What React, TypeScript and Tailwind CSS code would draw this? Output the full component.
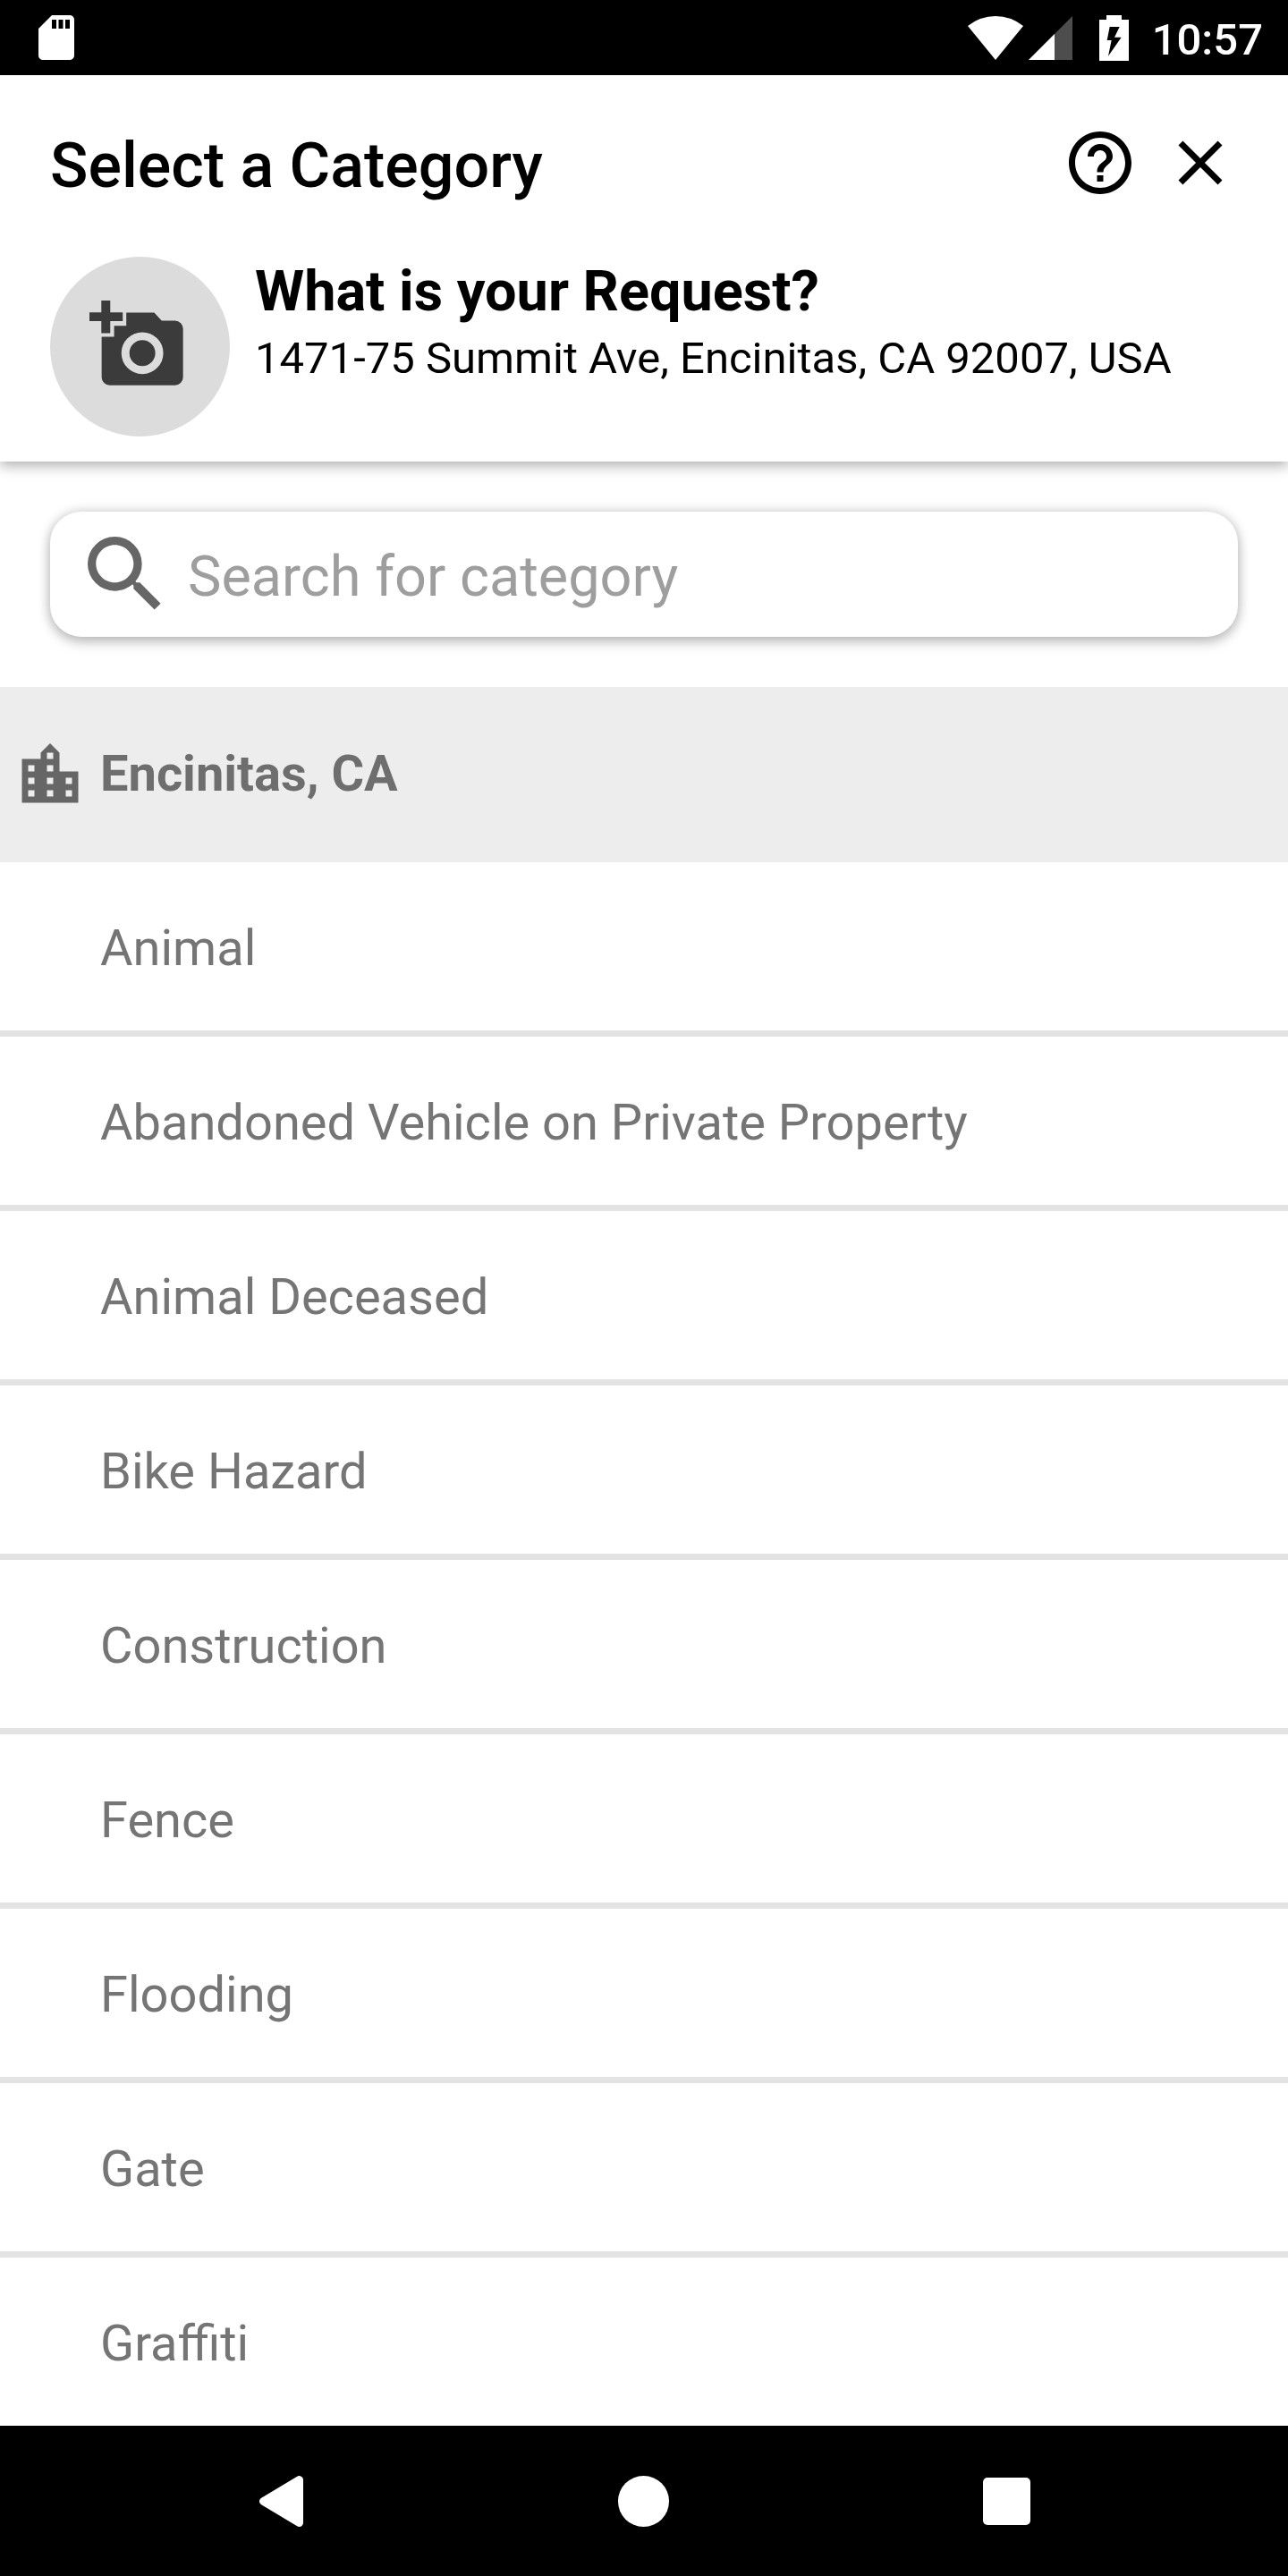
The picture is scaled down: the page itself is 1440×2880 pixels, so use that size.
import React from "react";
import { useState } from "react";
import {
  MdClose,
  MdHelpOutline,
  MdLocationCity,
  MdSdCard,
  MdSearch,
} from "react-icons/md";

const categories = [
  "Animal",
  "Abandoned Vehicle on Private Property",
  "Animal Deceased",
  "Bike Hazard",
  "Construction",
  "Fence",
  "Flooding",
  "Gate",
  "Graffiti",
];

const AddPhotoIcon = () => (
  <svg viewBox="300 226 316 286" className="h-[95px] w-[105px]" aria-hidden="true">
    <path
      fill="#3b3b3b"
      d="M340 226h30v40h42v29h-42v41h-30v-41h-40v-29h40z"
    />
    <path
      fill="#3b3b3b"
      d="M424 267h94l25 27h45a27 27 0 0 1 27 27v163a27 27 0 0 1-27 27H368a27 27 0 0 1-27-27V348h42v-37h41z"
    />
    <circle cx="478" cy="403" r="57" fill="none" stroke="#dcdcdc" strokeWidth="27" />
  </svg>
);

const StatusBar = () => {
  return (
    <div className="flex h-[84px] items-center justify-between bg-black pr-7 pl-[33px] text-white">
      <MdSdCard size={60} />
      <div className="flex items-center">
        {/* Wifi */}
        <svg viewBox="0 0 62 49" className="h-[49px] w-[62px]" fill="currentColor" aria-hidden="true">
          <path d="M0 11Q14 0 31 0T62 11L31 49z" />
        </svg>
        {/* Signal */}
        <svg viewBox="0 0 49 49" className="ml-1.5 h-[49px] w-[49px]" aria-hidden="true">
          <path d="M0 49L49 0v49z" fill="#4d4d4d" />
          <path d="M0 49L29 20v29z" fill="#fff" />
        </svg>
        {/* Battery */}
        <svg viewBox="0 0 99 153" className="ml-[30px] h-[51px] w-[33px]" aria-hidden="true">
          <path d="M24 0h51v15h24v138H0V15h24z" fill="#fff" />
          <path d="M35 39h33L51 74h23L30 137l11-53H26z" fill="#000" />
        </svg>
        <span className="ml-[26px] pt-1 text-[49px] leading-none font-medium">
          10:57
        </span>
      </div>
    </div>
  );
};

const Header = () => {
  return (
    <header className="bg-white px-14 pt-14 pb-7 text-black shadow-[0_7px_14px_rgba(0,0,0,0.18),0_0_14px_rgba(0,0,0,0.2)]">
      <div className="flex items-start justify-between">
        <h1 className="text-[70px] leading-[91px] font-medium">
          Select a Category
        </h1>
        <div className="flex gap-7">
          <button type="button" aria-label="Help">
            <MdHelpOutline size={84} />
          </button>
          <button type="button" aria-label="Close">
            <MdClose size={84} />
          </button>
        </div>
      </div>
      {/* Request */}
      <div className="mt-14 flex gap-7">
        <button
          type="button"
          aria-label="Add photo"
          className="flex h-[201px] w-[201px] shrink-0 items-center justify-center rounded-full bg-[#dcdcdc] pr-2 pb-2"
        >
          <AddPhotoIcon />
        </button>
        <div>
          <h2 className="text-[63px] leading-[78px] font-bold">
            What is your Request?
          </h2>
          <p className="text-[49px] leading-[72px]">
            1471-75 Summit Ave, Encinitas, CA 92007, USA
          </p>
        </div>
      </div>
    </header>
  );
};

const NavBar = () => {
  return (
    <nav className="grid h-[168px] grid-cols-3 items-center justify-items-center bg-black px-28 text-white">
      <button type="button" aria-label="Back">
        <svg viewBox="0 0 49 57" className="h-[57px] w-[49px]" aria-hidden="true">
          <path
            d="M44.500 4.500V52.500L4.500 28.500z"
            fill="#fff"
            stroke="#fff"
            strokeWidth="9"
            strokeLinejoin="round"
          />
        </svg>
      </button>
      <button
        type="button"
        aria-label="Home"
        className="h-[57px] w-[57px] rounded-full bg-white"
      />
      <button
        type="button"
        aria-label="Recent apps"
        className="h-[53px] w-[53px] rounded-[5px] bg-white"
      />
    </nav>
  );
};

const App = () => {
  const [search, setSearch] = useState("");

  const visible = categories.filter((name) =>
    name.toLowerCase().includes(search.toLowerCase())
  );

  return (
    <div className="flex min-h-screen flex-col bg-white font-[Roboto,sans-serif]">
      <StatusBar />
      <Header />
      <main className="flex-1">
        {/* Search */}
        <div className="px-14 py-14">
          <label className="flex h-[140px] items-center gap-3.5 rounded-[35px] bg-white px-7 shadow-[0_7px_14px_rgba(0,0,0,0.18),0_0_14px_rgba(0,0,0,0.2)]">
            <MdSearch size={112} className="shrink-0 text-[#666666]" />
            <input
              type="text"
              aria-label="Search for category"
              placeholder="Search for category"
              value={search}
              onChange={(e) => setSearch(e.target.value)}
              className="w-full min-w-0 pt-1.5 text-[63px] text-[#757575] outline-none placeholder:text-[#9e9e9e]"
            />
          </label>
        </div>
        {/* City */}
        <div className="flex h-[196px] items-center gap-3.5 bg-[#ededed] px-3.5">
          <MdLocationCity size={84} className="text-[#666666]" />
          <h3 className="pb-0.5 text-[56px] font-bold text-[#6e6e6e]">
            Encinitas, CA
          </h3>
        </div>
        {/* Categories */}
        <ul className="divide-y-[7px] divide-[#e3e3e3]">
          {visible.map((name) => (
            <li key={name}>
              <button
                type="button"
                className="h-[188px] w-full px-28 pt-1 text-left text-[56px] text-[#757575]"
              >
                {name}
              </button>
            </li>
          ))}
        </ul>
      </main>
      <NavBar />
    </div>
  );
};

export default App;
